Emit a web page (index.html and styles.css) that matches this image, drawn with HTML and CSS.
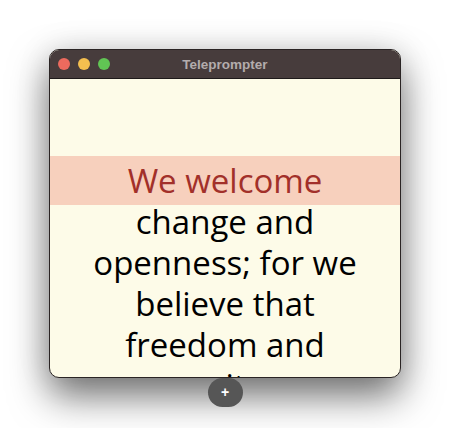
FILE: index.html
```html
<!DOCTYPE html>
<html>
<head>
<meta charset="utf-8">
<link rel="stylesheet" href="styles.css">
</head>
<body>
<div class="stage">
  <div class="window">
    <div class="titlebar">
      <div class="lights">
        <span class="light red"></span>
        <span class="light yellow"></span>
        <span class="light green"></span>
      </div>
      <div class="title">Teleprompter</div>
    </div>
    <div class="content">
      <div class="script">
        <div class="reading-line">We welcome</div>
        <p class="rest">change and openness; for we believe that freedom and security go together, that the advance of human liberty can only strengthen the cause of world peace.</p>
      </div>
    </div>
  </div>
  <button class="add">+</button>
</div>
</body>
</html>
```

FILE: styles.css
```css
html, body {
  margin: 0;
  padding: 0;
  background: #ffffff;
}
.stage {
  width: 450px;
  height: 428px;
  display: flex;
  flex-direction: column;
  align-items: center;
  padding-top: 49px;
  box-sizing: border-box;
  overflow: hidden;
}
.window {
  width: 352px;
  height: 329px;
  box-sizing: border-box;
  border: 1px solid #2a2424;
  border-radius: 10px;
  overflow: hidden;
  display: flex;
  flex-direction: column;
  background: #fdfbe8;
  box-shadow: 0 18px 38px rgba(0, 0, 0, 0.55), 0 0 34px rgba(0, 0, 0, 0.1);
  flex-shrink: 0;
}
.titlebar {
  height: 28px;
  background: #473c3c;
  border-bottom: 1px solid #1e1a1a;
  display: flex;
  align-items: center;
  position: relative;
  flex-shrink: 0;
}
.lights {
  display: flex;
  gap: 8px;
  padding-left: 8px;
  position: absolute;
  left: 0;
  top: 8px;
}
.light {
  width: 12px;
  height: 12px;
  border-radius: 50%;
  display: block;
}
.red { background: #ec6a5e; }
.yellow { background: #f4bf4f; }
.green { background: #61c554; }
.title {
  flex: 1;
  text-align: center;
  font-family: "Liberation Sans", Arial, sans-serif;
  font-weight: bold;
  font-size: 13.5px;
  color: #b3acac;
  padding-top: 1px;
}
.content {
  flex: 1;
  overflow: hidden;
}
.script {
  padding-top: 81px;
  font-family: "Open Sans", sans-serif;
  font-size: 33px;
  line-height: 41px;
  text-align: center;
}
.reading-line {
  background: #f7d0bd;
  color: #a2302a;
  padding: 4px 0;
  margin: -4px 0;
  position: relative;
}
.rest {
  margin: 0;
  padding: 0 26px;
  color: #000;
}
.add {
  width: 35px;
  height: 29px;
  border: none;
  border-radius: 15px;
  background: #565656;
  color: #fff;
  font-family: "Liberation Sans", Arial, sans-serif;
  font-weight: bold;
  font-size: 14px;
  line-height: 29px;
  padding: 0;
  margin-top: 0;
  flex-shrink: 0;
}
```
